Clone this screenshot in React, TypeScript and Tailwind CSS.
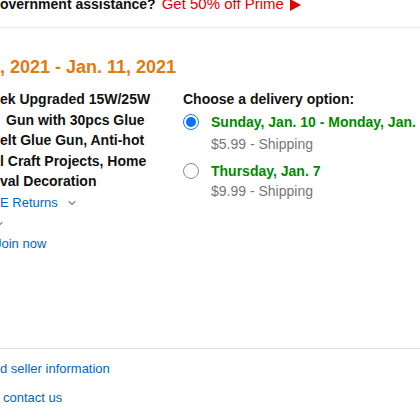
import { ChevronDown } from "lucide-react";

function Radio({ checked }: { checked?: boolean }) {
  return checked ? (
    <span className="mt-[2px] flex h-[16px] w-[16px] shrink-0 items-center justify-center rounded-full border border-[#1a73e8] bg-white">
      <span className="h-[10px] w-[10px] rounded-full bg-[#0b6fff]" />
    </span>
  ) : (
    <span className="mt-[2px] h-[16px] w-[16px] shrink-0 rounded-full border border-[#8d8d8d] bg-white" />
  );
}

export default function App() {
  const title = [
    "ek Upgraded 15W/25W",
    "Gun with 30pcs Glue",
    "elt Glue Gun, Anti-hot",
    "l Craft Projects, Home",
    "val Decoration",
  ];

  return (
    <div
      className="h-[420px] w-[420px] overflow-hidden bg-white text-[14px] text-[#111]"
      style={{ fontFamily: '"Liberation Sans", Arial, sans-serif' }}
    >
      {/* prime banner */}
      <div className="-mt-[6px] flex h-[33px] items-baseline whitespace-nowrap leading-[20px]">
        <span className="font-bold">overnment assistance?</span>
        <span className="ml-[6px] text-[15px] text-[#e00000]">Get 50% off Prime</span>
        <svg className="ml-[6px] self-start mt-[5px]" width="11" height="12" viewBox="0 0 11 12">
          <path d="M0 0 L11 6 L0 12 Z" fill="#e00000" />
        </svg>
      </div>
      <div className="border-t border-[#e7e7e7]" />

      <div className="mt-[27px] whitespace-nowrap text-[18px] font-bold leading-[24px] text-[#e47911]">
        , 2021 - Jan. 11, 2021
      </div>

      <div className="mt-[10px] flex">
        <div className="w-[183px] shrink-0 whitespace-nowrap">
          <div className="font-bold leading-[20.5px]">
            {title.map((t, i) => (
              <div key={i} className={i === 1 ? "pl-[6px]" : ""}>
                {t}
              </div>
            ))}
          </div>
          <div className="mt-[1px] flex items-center text-[13px] leading-[20.5px] text-[#0066c0]">
            E Returns
            <ChevronDown className="ml-[8px] h-[12px] w-[12px] text-[#888]" strokeWidth={2.5} />
          </div>
          <div className="mt-[1px] h-[20px] -ml-[7px] flex items-center">
            <ChevronDown className="h-[12px] w-[12px] text-[#888]" strokeWidth={2.5} />
          </div>
          <div className="mt-[1px] -ml-[5px] text-[13px] leading-[18px] text-[#0066c0]">Join now</div>
        </div>

        <div className="min-w-0 flex-1 whitespace-nowrap leading-[20px]">
          <div className="font-bold">Choose a delivery option:</div>
          <div className="mt-[3px] flex gap-[12px]">
            <Radio checked />
            <div>
              <div className="font-bold text-[#008a00]">Sunday, Jan. 10 - Monday, Jan. 11</div>
              <div className="mt-[2px] text-[#767676]">$5.99 - Shipping</div>
            </div>
          </div>
          <div className="mt-[7px] flex gap-[12px]">
            <Radio />
            <div>
              <div className="font-bold text-[#008a00]">Thursday, Jan. 7</div>
              <div className="text-[#767676]">$9.99 - Shipping</div>
            </div>
          </div>
        </div>
      </div>

      <div className="mt-[95px] border-t border-[#dddddd]" />
      <div className="whitespace-nowrap text-[13px] text-[#0066c0]">
        <div className="mt-[11px] leading-[18px]">d seller information</div>
        <div className="mt-[11px] pl-[3px] leading-[18px]">contact us</div>
      </div>
    </div>
  );
}
